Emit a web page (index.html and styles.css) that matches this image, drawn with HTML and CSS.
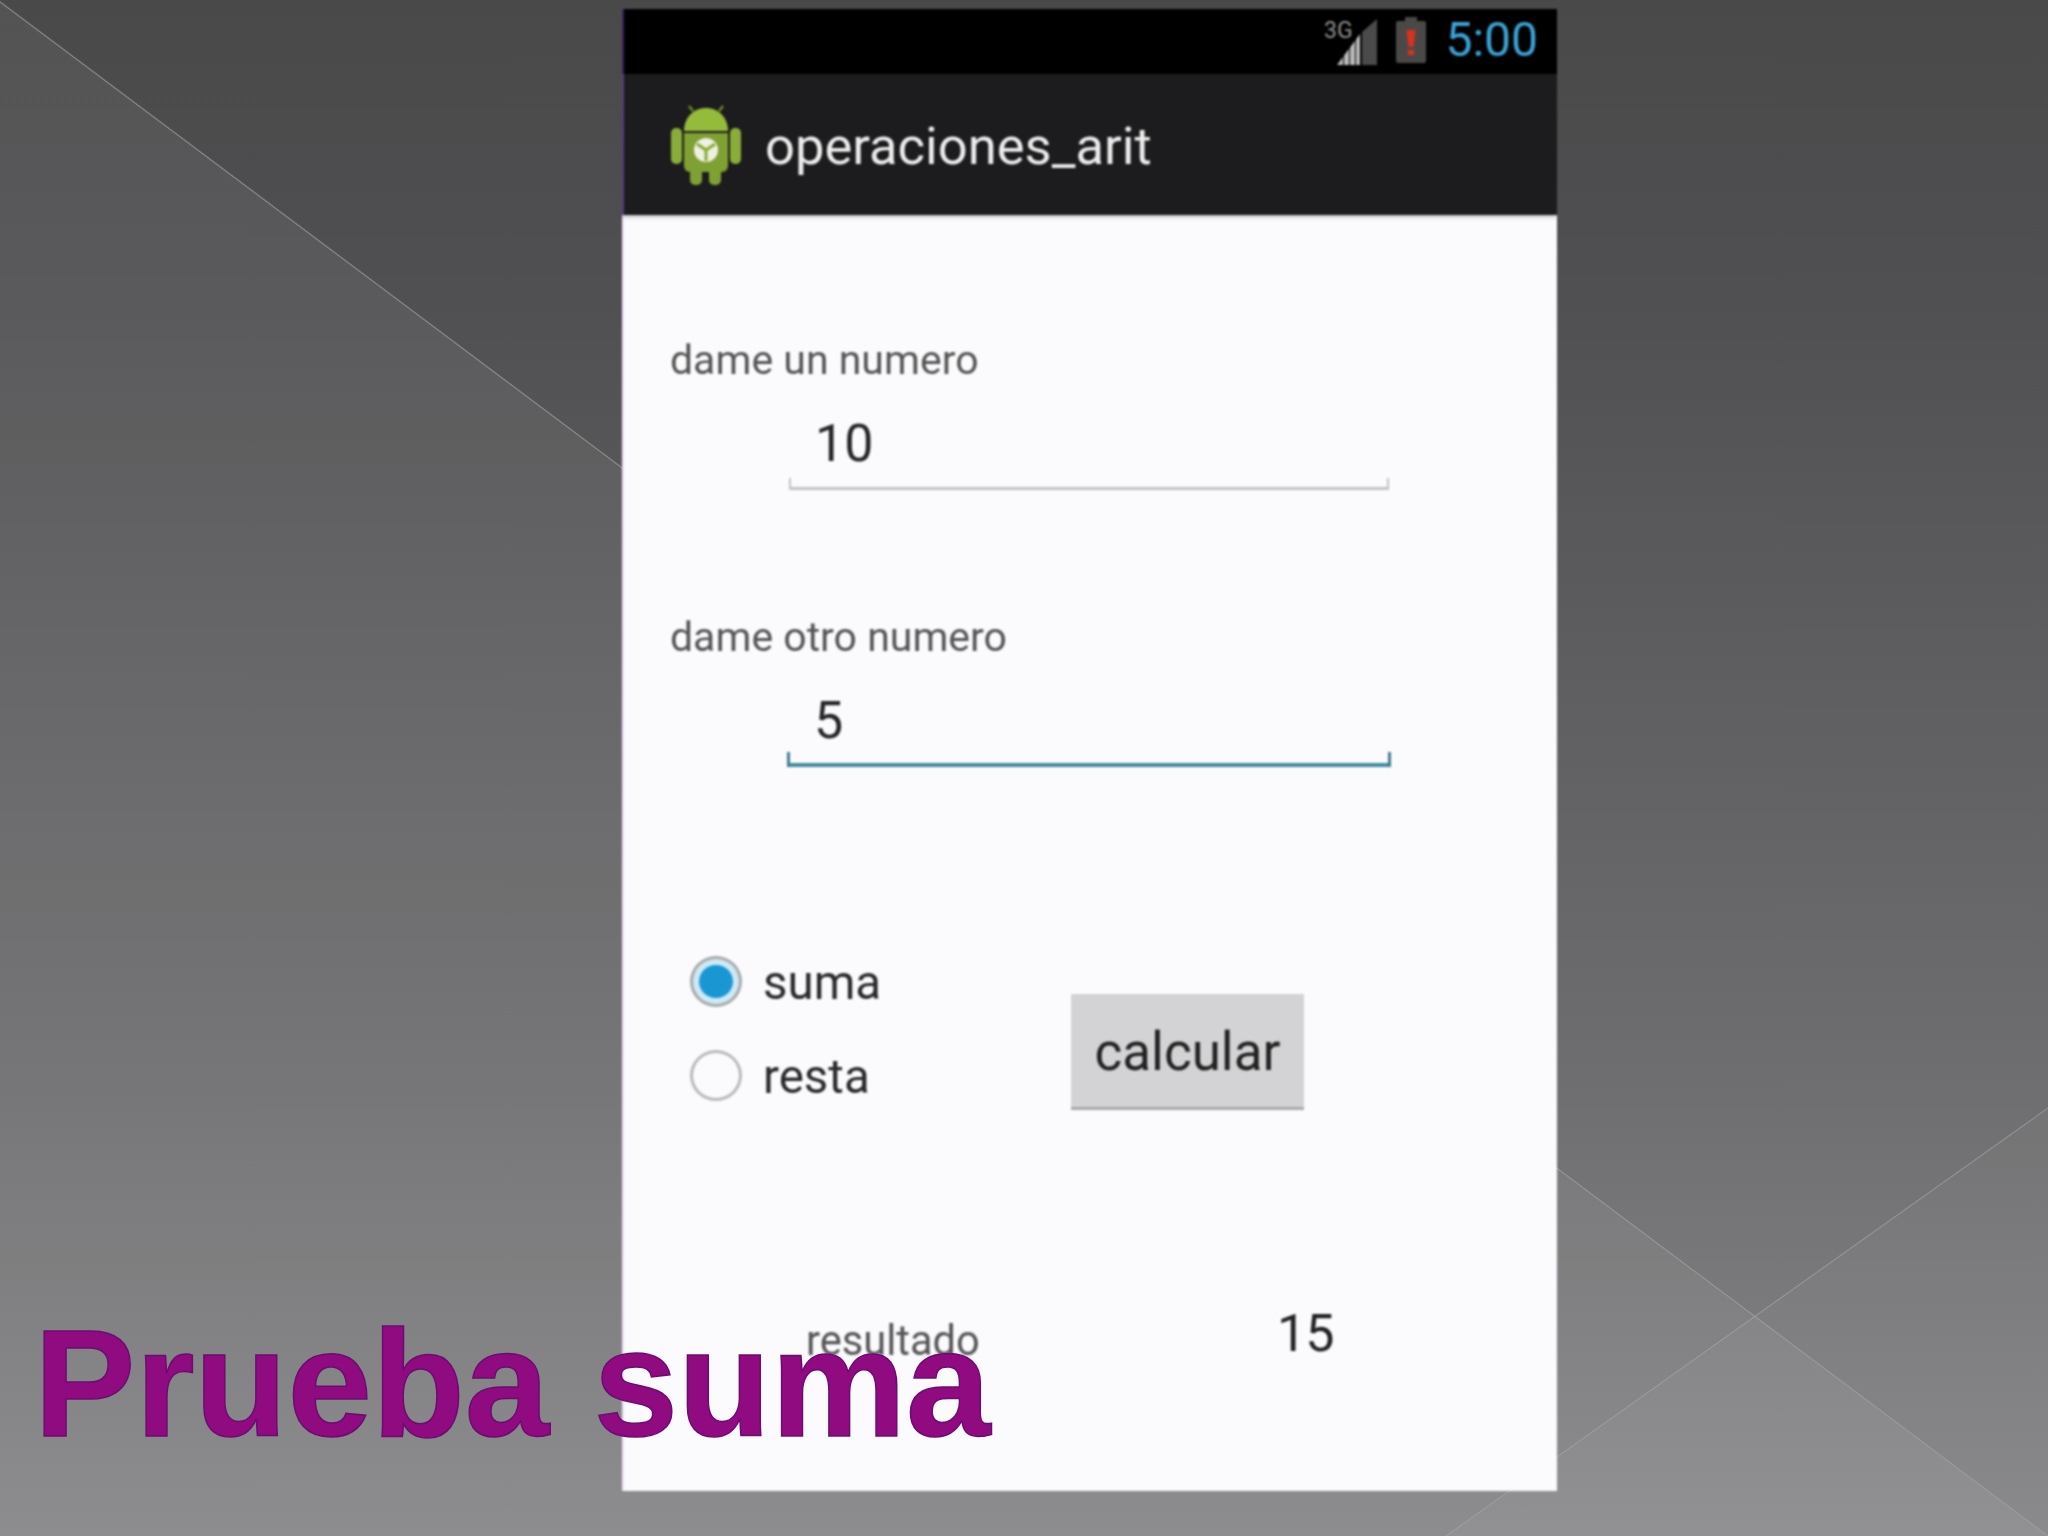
FILE: index.html
```html
<!DOCTYPE html>
<html lang="es">
<head>
<meta charset="utf-8">
<title>Prueba suma</title>
<link rel="stylesheet" href="styles.css">
</head>
<body>
<main class="slide">
  <svg class="slide-art" viewBox="0 0 2048 1536" aria-hidden="true">
    <polygon class="shard-left" points="0,0 2048,1536 0,1536"/>
    <polygon class="shard-low" points="2048,1108 2048,1536 1446,1536"/>
    <line class="shard-line" x1="0" y1="2" x2="2048" y2="1536"/>
    <line class="shard-line" x1="2048" y1="1108" x2="1446" y2="1536"/>
  </svg>

  <section class="phone">
    <header class="status-bar">
      <svg class="signal" viewBox="0 0 53 47" aria-hidden="true">
        <polygon class="signal-dim" points="53,1 53,47 38,47 38,14"/>
        <polygon class="signal-on" points="36,16 36,47 13,47"/>
        <rect class="signal-gap" x="19" y="25" width="1" height="22"/>
        <rect class="signal-gap" x="25" y="20" width="1" height="27"/>
        <rect class="signal-gap" x="31" y="15" width="1" height="32"/>
        <text class="signal-3g" x="0" y="20">3G</text>
      </svg>
      <svg class="battery" viewBox="0 0 30 46" aria-hidden="true">
        <path class="battery-body" d="M9 0h12v4h7a2 2 0 0 1 2 2v38a2 2 0 0 1-2 2H2a2 2 0 0 1-2-2V6a2 2 0 0 1 2-2h7z"/>
        <path class="battery-mark" d="M10.500 13h9l-2 17h-5z"/>
        <rect class="battery-mark" x="12" y="33" width="6" height="5"/>
      </svg>
      <span class="clock">5:00</span>
    </header>

    <header class="action-bar">
      <svg class="android" viewBox="0 0 70 84" aria-hidden="true">
        <path class="android-antenna" d="M22 8l-4-5M48 8l4-5"/>
        <rect class="android-arm" x="0" y="25" width="11" height="36" rx="5"/>
        <rect class="android-arm" x="59" y="25" width="11" height="36" rx="5"/>
        <path class="android-light" d="M13 28C13 15 22 5 35 5s22 10 22 23z"/>
        <path class="android-green" d="M13 30h44v33a6 6 0 0 1-6 6H19a6 6 0 0 1-6-6z"/>
        <rect class="android-green" x="19" y="64" width="12" height="18" rx="5"/>
        <rect class="android-green" x="38" y="64" width="12" height="18" rx="5"/>
        <circle class="android-cube" cx="35" cy="47" r="12"/>
        <path class="android-cube-line" d="M35 47v11M35 47l-9-6M35 47l9-6"/>
      </svg>
      <h1 class="app-title">operaciones_arit</h1>
    </header>

    <div class="app-body">
      <p class="field-label first">dame un numero</p>
      <div class="field">10</div>

      <p class="field-label second">dame otro numero</p>
      <div class="field active">5</div>

      <div class="controls">
        <div class="radio-group">
          <div class="radio-row">
            <span class="radio checked"></span>
            <span class="radio-text">suma</span>
          </div>
          <div class="radio-row">
            <span class="radio"></span>
            <span class="radio-text">resta</span>
          </div>
        </div>
        <div class="button">calcular</div>
      </div>

      <div class="result-row">
        <span class="result-label">resultado</span>
        <span class="result-value">15</span>
      </div>
    </div>
  </section>

  <h2 class="caption">Prueba suma</h2>
</main>
</body>
</html>
```

FILE: styles.css
```css
* {
  box-sizing: border-box;
}

html,
body {
  margin: 0;
  padding: 0;
}

.slide {
  position: relative;
  width: 2048px;
  height: 1536px;
  overflow: hidden;
  padding: 9px 0 0 622px;
  font-family: Roboto, "Liberation Sans", sans-serif;
  background: linear-gradient(180deg, #4a494a 0, #504f51 300px, #636264 800px, #6e6d6f 1080px, #868587 1536px);
}

.slide-art {
  position: absolute;
  left: 0;
  top: 0;
  width: 2048px;
  height: 1536px;
}

.shard-left {
  fill: #fff;
  fill-opacity: 0.06;
}

.shard-low {
  fill: #fff;
  fill-opacity: 0.035;
}

.shard-line {
  stroke: #a9a8aa;
  stroke-opacity: 0.55;
  stroke-width: 1.200;
}

.phone {
  position: relative;
  width: 935px;
  height: 1482px;
  overflow: hidden;
  display: flex;
  flex-direction: column;
  filter: blur(0.8px);
}

.status-bar {
  height: 65px;
  flex: none;
  display: flex;
  align-items: center;
  justify-content: flex-end;
  gap: 20px;
  padding-right: 19px;
  background: #000;
  border-left: 2px solid #3c1f66;
}

.signal {
  width: 53px;
  height: 47px;
  margin: -1px -1px 0 0;
  overflow: visible;
}

.signal-on {
  fill: #b9b9b9;
}

.signal-dim {
  fill: #4a4a4a;
}

.signal-gap {
  fill: #000;
}

.signal-3g {
  font-family: "Liberation Sans Narrow", Roboto, sans-serif;
  font-size: 23px;
  fill: #8f8f8f;
}

.battery {
  width: 30px;
  height: 46px;
  margin: -3px -1px 0 0;
}

.battery-body {
  fill: #4b4947;
}

.battery-mark {
  fill: #d8321e;
}

.clock {
  font-size: 48px;
  line-height: 54px;
  color: #3aa3d6;
  margin-top: -3px;
}

.action-bar {
  height: 141px;
  flex: none;
  display: flex;
  align-items: center;
  padding-left: 47px;
  background: #1c1c1e;
  border-left: 2px solid #5a3a8a;
  box-shadow: 0 2px 4px rgba(0, 0, 0, 0.25);
  position: relative;
}

.android {
  width: 70px;
  height: 84px;
  flex: none;
  margin-top: 1px;
}

.android-antenna {
  stroke: #6f8a2a;
  stroke-width: 2.500;
  fill: none;
}

.android-green {
  fill: #7fa032;
}

.android-arm {
  fill: #8aad3a;
}

.android-light {
  fill: #95bb3a;
}

.android-cube {
  fill: #eef0e6;
}

.android-cube-line {
  stroke: #86ab2f;
  stroke-width: 3;
  fill: none;
}

.app-title {
  margin: 3px 0 0 24px;
  font-size: 52.500px;
  font-weight: 400;
  line-height: 60px;
  color: #ececec;
}

.app-body {
  flex: 1;
  background: #fbfafd;
  border-left: 2px solid #f3e2fb;
}

.field-label {
  margin: 0 0 0 46px;
  font-size: 41px;
  line-height: 48px;
  color: #555;
}

.field-label.first {
  padding-top: 121px;
  margin-bottom: 28px;
}

.field-label.second {
  margin-top: 123px;
  margin-bottom: 28px;
}

.field {
  position: relative;
  width: 600px;
  margin-left: 165px;
  padding: 0 0 11px 26px;
  font-size: 52px;
  line-height: 64px;
  color: #262626;
  border-bottom: 3px solid #c3c3c5;
}

.field::before,
.field::after {
  content: "";
  position: absolute;
  bottom: -3px;
  width: 2px;
  height: 12px;
  background: #c3c3c5;
}

.field::before {
  left: 0;
}

.field::after {
  right: 0;
}

.field.active {
  width: 604px;
  margin-left: 163px;
  padding: 0 0 10px 27px;
  border-bottom: 4px solid #3f8d9e;
}

.field.active::before,
.field.active::after {
  bottom: -4px;
  width: 3px;
  height: 15px;
  background: #3f7f8e;
}

.controls {
  display: flex;
  align-items: flex-start;
  margin: 189px 0 0 66px;
}

.radio-group {
  width: 381px;
  display: flex;
  flex-direction: column;
  gap: 41px;
}

.radio-row {
  display: flex;
  align-items: flex-start;
  gap: 21px;
}

.radio {
  position: relative;
  width: 52px;
  height: 51px;
  flex: none;
  border: 3px solid #b9b9bb;
  border-radius: 50%;
  background: #fbfafd;
}

.radio.checked {
  background: #cde9f5;
  border-color: #a9aaad;
}

.radio.checked::after {
  content: "";
  position: absolute;
  left: 6px;
  top: 6px;
  width: 34px;
  height: 33px;
  border-radius: 50%;
  background: #1a97d3;
}

.radio-text {
  font-size: 47.500px;
  line-height: 51px;
  padding-top: 2px;
  color: #2a2a2a;
}

.button {
  width: 233px;
  height: 116px;
  margin-top: 38px;
  padding-top: 2px;
  text-align: center;
  font-size: 53px;
  line-height: 113px;
  color: #222;
  background: #d3d2d4;
  border-bottom: 3px solid #a9a8aa;
}

.result-row {
  display: flex;
  align-items: flex-start;
  margin: 192px 0 0 182px;
}

.result-label {
  width: 471px;
  margin-top: 15px;
  font-size: 41.600px;
  line-height: 48px;
  color: #555;
}

.result-value {
  font-size: 52px;
  line-height: 64px;
  letter-spacing: -1px;
  color: #222;
}

.caption {
  position: absolute;
  left: 34px;
  top: 1296px;
  margin: 0;
  font-family: "Liberation Sans", Arial, sans-serif;
  font-size: 152px;
  font-weight: 700;
  line-height: 174px;
  white-space: nowrap;
  word-spacing: 2px;
  color: #900a80;
  -webkit-text-stroke: 1.500px #6b0c72;
}
```
